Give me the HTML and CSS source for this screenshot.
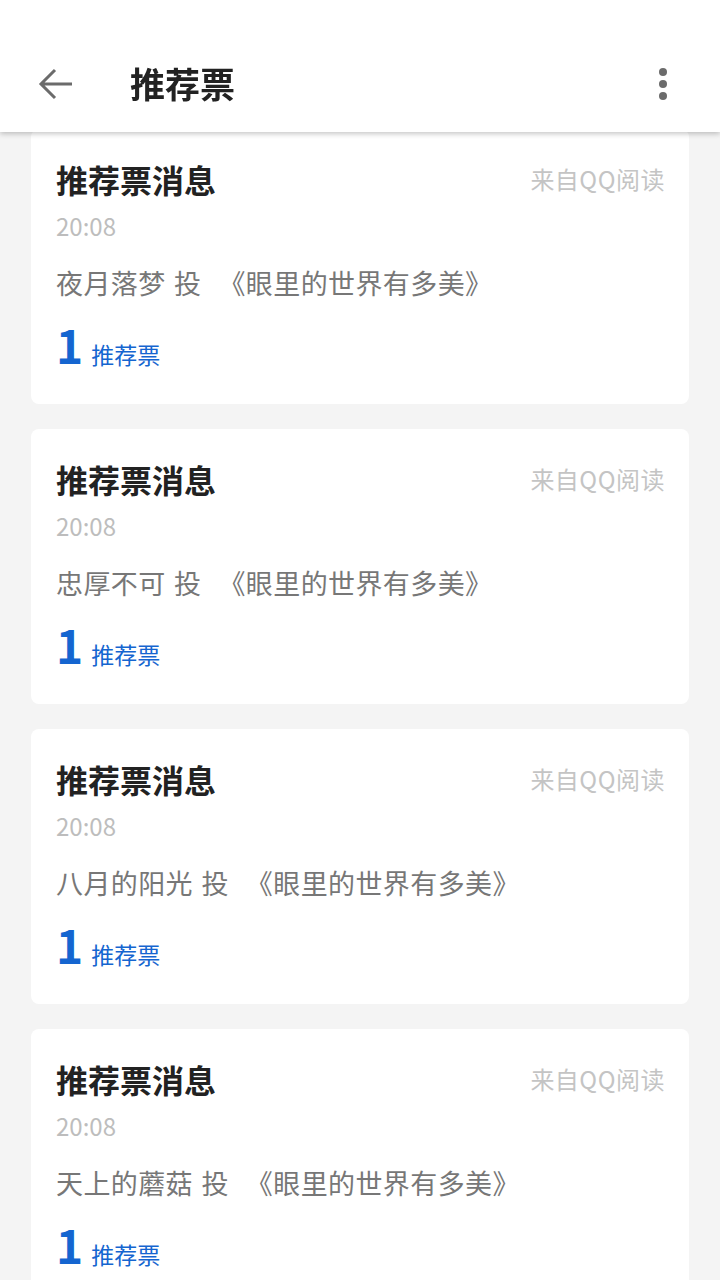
FILE: index.html
```html
<!DOCTYPE html>
<html lang="zh-CN">
<head>
<meta charset="utf-8">
<link rel="stylesheet" href="styles.css">
</head>
<body>
<header class="appbar">
  <div class="toolbar">
    <svg class="back" width="36" height="36" viewBox="0 0 36 36"><path d="M34 18H4M17 4L3 18l14 14" fill="none" stroke="#6b6b6b" stroke-width="3"/></svg>
    <h1 class="title">推荐票</h1>
    <svg class="more" width="10" height="36" viewBox="0 0 10 36"><circle cx="5" cy="6" r="4" fill="#6b6b6b"/><circle cx="5" cy="18" r="4" fill="#6b6b6b"/><circle cx="5" cy="30" r="4" fill="#6b6b6b"/></svg>
  </div>
</header>
<main class="list">
  <section class="card">
    <div class="row"><span class="ctitle">推荐票消息</span><span class="src">来自QQ阅读</span></div>
    <div class="time">20:08</div>
    <div class="body">夜月落梦 投<span class="book">《眼里的世界有多美》</span></div>
    <div class="vote"><span class="num">1</span><span class="unit">推荐票</span></div>
  </section>
  <section class="card">
    <div class="row"><span class="ctitle">推荐票消息</span><span class="src">来自QQ阅读</span></div>
    <div class="time">20:08</div>
    <div class="body">忠厚不可 投<span class="book">《眼里的世界有多美》</span></div>
    <div class="vote"><span class="num">1</span><span class="unit">推荐票</span></div>
  </section>
  <section class="card">
    <div class="row"><span class="ctitle">推荐票消息</span><span class="src">来自QQ阅读</span></div>
    <div class="time">20:08</div>
    <div class="body">八月的阳光 投<span class="book">《眼里的世界有多美》</span></div>
    <div class="vote"><span class="num">1</span><span class="unit">推荐票</span></div>
  </section>
  <section class="card">
    <div class="row"><span class="ctitle">推荐票消息</span><span class="src">来自QQ阅读</span></div>
    <div class="time">20:08</div>
    <div class="body">天上的蘑菇 投<span class="book">《眼里的世界有多美》</span></div>
    <div class="vote"><span class="num">1</span><span class="unit">推荐票</span></div>
  </section>
</main>
</body>
</html>
```
FILE: styles.css
```css
* { box-sizing: border-box; }
html, body { margin: 0; padding: 0; }
body {
  background: #f4f4f4;
  font-family: "Noto Sans CJK SC", "Noto Sans", sans-serif;
  width: 720px;
  height: 1280px;
  overflow: hidden;
}
.appbar {
  position: sticky;
  top: 0;
  z-index: 2;
  background: #fff;
  height: 132px;
  padding-top: 46px;
  box-shadow: 0 2px 5px rgba(0,0,0,0.22);
}
.toolbar {
  height: 72px;
  display: flex;
  align-items: center;
  padding: 0 0 0 38px;
}
.back { flex: none; margin-top: 4px; }
.title {
  margin: 0 0 0 56px;
  font-size: 35px;
  font-weight: 700;
  color: #222;
  flex: 1;
  line-height: 1;
}
.more { flex: none; margin-right: 52px; margin-top: 4px; }
.list {
  margin-top: -3px;
  padding: 0 31px;
  display: flex;
  flex-direction: column;
  gap: 25px;
}
.card {
  background: #fff;
  border-radius: 8px;
  height: 275px;
  padding: 28px 24px 0 25px;
}
.row {
  display: flex;
  justify-content: space-between;
  align-items: flex-start;
  height: 44px;
}
.ctitle {
  font-size: 32px;
  font-weight: 700;
  color: #222;
  line-height: 44px;
}
.src {
  font-size: 24px;
  letter-spacing: 0.5px;
  color: #c4c4c4;
  line-height: 44px;
}
.time {
  font-size: 24px;
  color: #bdbdbd;
  line-height: 32px;
  margin-top: 9px;
}
.body {
  font-size: 27px;
  letter-spacing: 0.4px;
  word-spacing: 2px;
  color: #777;
  line-height: 40px;
  margin-top: 21px;
}
.book { margin-left: 17px; }
.vote {
  display: flex;
  align-items: baseline;
  margin-top: 16px;
  color: #1565d0;
}
.num {
  font-size: 46px;
  font-weight: 700;
  line-height: 50px;
}
.unit {
  font-size: 23px;
  margin-left: 8px;
}
```
